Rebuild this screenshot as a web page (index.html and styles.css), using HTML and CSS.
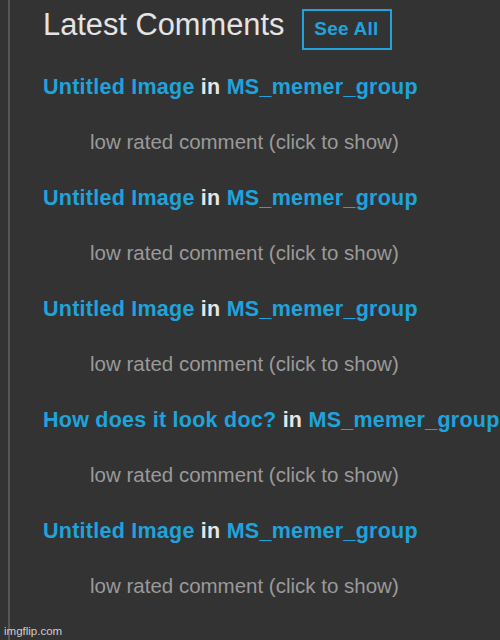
FILE: index.html
```html
<!DOCTYPE html>
<html lang="en">
<head>
  <meta charset="UTF-8">
  <title>Latest Comments</title>
  <meta name="viewport" content="width=device-width, initial-scale=1.0">
  <link rel="stylesheet" href="styles.css">
</head>
<body>
  <div class="sidebar">
    <div class="head">
      <h2 class="head-title">Latest Comments</h2>
      <a class="see-all" href="#">See All</a>
    </div>

    <!-- comment list -->
    <div class="com-list">
      <div class="com">
        <div class="com-title"><a href="#">Untitled Image</a> in <a href="#">MS_memer_group</a></div>
        <div class="com-low">low rated comment (click to show)</div>
      </div>
      <div class="com">
        <div class="com-title"><a href="#">Untitled Image</a> in <a href="#">MS_memer_group</a></div>
        <div class="com-low">low rated comment (click to show)</div>
      </div>
      <div class="com">
        <div class="com-title"><a href="#">Untitled Image</a> in <a href="#">MS_memer_group</a></div>
        <div class="com-low">low rated comment (click to show)</div>
      </div>
      <div class="com">
        <div class="com-title"><a href="#">How does it look doc?</a> in <a href="#">MS_memer_group</a></div>
        <div class="com-low">low rated comment (click to show)</div>
      </div>
      <div class="com">
        <div class="com-title"><a href="#">Untitled Image</a> in <a href="#">MS_memer_group</a></div>
        <div class="com-low">low rated comment (click to show)</div>
      </div>
    </div>
  </div>

  <div class="watermark">imgflip.com</div>
</body>
</html>
```

FILE: styles.css
```css
* { box-sizing: border-box; }

html, body {
  margin: 0;
  padding: 0;
  height: 100%;
}

body {
  font-family: "Liberation Sans", Arial, sans-serif;
  background: #333333;
  overflow: hidden;
  position: relative;
}

.sidebar {
  margin-left: 8px;
  border-left: 2px solid #575757;
  padding: 9px 0 0 33px;
  height: 640px;
}

.head {
  display: flex;
  align-items: baseline;
  gap: 18px;
}

.head-title {
  margin: 0;
  font-size: 30.8px;
  font-weight: normal;
  line-height: 30px;
  color: #e4e4e4;
}

.see-all {
  display: block;
  border: 2px solid #1ea3dc;
  padding: 8px 12px 9px 10px;
  font-size: 19px;
  font-weight: bold;
  letter-spacing: 0.2px;
  line-height: 20px;
  color: #1ea3dc;
  text-decoration: none;
}

.com-list {
  margin-top: 25px;
}

.com {
  margin-bottom: 32px;
}

.com-title {
  font-size: 21.5px;
  font-weight: bold;
  letter-spacing: 0.25px;
  line-height: 24px;
  color: #e6e6e6;
  white-space: nowrap;
}

.com-title a {
  color: #1ea3dc;
  text-decoration: none;
}

.com-low {
  margin-top: 31px;
  padding-left: 47px;
  font-size: 20.5px;
  line-height: 24px;
  color: #9a9a9a;
  white-space: nowrap;
}

.watermark {
  position: absolute;
  left: 4px;
  bottom: 3px;
  font-size: 11.5px;
  color: rgba(235, 235, 235, 0.85);
}
```
